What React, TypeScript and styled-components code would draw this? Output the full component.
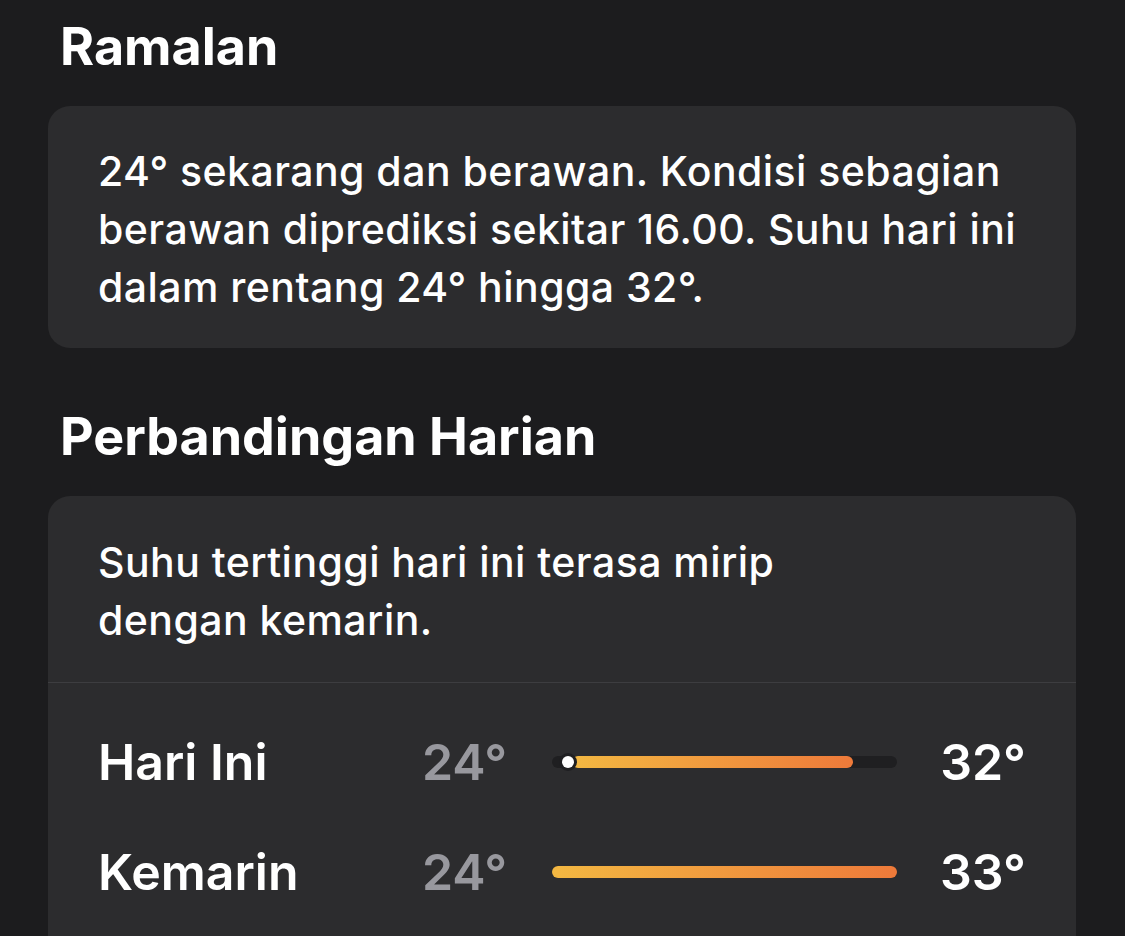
import React from 'react';
import styled, { createGlobalStyle } from 'styled-components';

const GlobalStyle = createGlobalStyle`
  html, body {
    margin: 0;
    padding: 0;
    background: #1c1c1e;
  }
  body {
    font-family: Inter, "Noto Sans", "Liberation Sans", sans-serif;
    color: #ffffff;
  }
`;

const Page = styled.main`
  width: 1125px;
  height: 936px;
  overflow: hidden;
  box-sizing: border-box;
  padding: 15px 49px 0 48px;
`;

const Heading = styled.h2`
  margin: 0 0 27px 12px;
  font-size: 52px;
  line-height: 64px;
  font-weight: 700;
`;

const Card = styled.section`
  background: #2c2c2e;
  border-radius: 22px;
  margin-bottom: 57px;
  overflow: hidden;
`;

const Summary = styled.p<{ $top?: number; $bottom?: number }>`
  margin: 0;
  padding: ${p => p.$top ?? 36}px 50px ${p => p.$bottom ?? 32}px 50px;
  font-size: 41px;
  line-height: 58px;
  font-weight: 500;
  letter-spacing: 0.45px;
`;

const Divider = styled.hr`
  margin: 0;
  border: none;
  height: 1px;
  background: #3d3d40;
`;

const Rows = styled.div`
  padding: 24px 50px 40px 50px;
`;

const Row = styled.div`
  display: grid;
  grid-template-columns: 324px 130px 345px 129px;
  align-items: center;
  height: 110px;
`;

const Label = styled.span`
  font-size: 50px;
  font-weight: 600;
`;

const Temp = styled.span<{ $muted?: boolean; $right?: boolean }>`
  font-size: 50px;
  font-weight: 600;
  color: ${p => (p.$muted ? '#98989e' : '#ffffff')};
  text-align: ${p => (p.$right ? 'right' : 'left')};
`;

const Track = styled.div`
  position: relative;
  height: 12px;
  border-radius: 6px;
  background: #1f1f21;
`;

const Fill = styled.div`
  position: absolute;
  top: 0;
  bottom: 0;
  border-radius: 6px;
  background: linear-gradient(to right, #f3b842, #ee7a3a);
`;

const Dot = styled.div`
  position: absolute;
  top: 50%;
  width: 12px;
  height: 12px;
  margin-left: -6px;
  margin-top: -6px;
  border-radius: 50%;
  background: #ffffff;
  box-shadow: 0 0 0 3px #1f1f21;
`;

type Day = { label: string; low: number; high: number; start: number; end: number; current?: number };

const days: Day[] = [
  { label: 'Hari Ini', low: 24, high: 32, start: 20, end: 301, current: 16 },
  { label: 'Kemarin', low: 24, high: 33, start: 0, end: 345 },
];

const App = () => (
  <Page>
    <GlobalStyle />
    <Heading>Ramalan</Heading>
    <Card>
      <Summary>
        24° sekarang dan berawan. Kondisi sebagian berawan diprediksi sekitar 16.00. Suhu hari ini dalam
        rentang 24° hingga 32°.
      </Summary>
    </Card>

    <Heading>Perbandingan Harian</Heading>
    <Card>
      <Summary $top={37} $bottom={33}>
        Suhu tertinggi hari ini terasa mirip
        <br />
        dengan kemarin.
      </Summary>
      <Divider />
      <Rows>
        {days.map(d => (
          <Row key={d.label}>
            <Label>{d.label}</Label>
            <Temp $muted>{d.low}°</Temp>
            <Track>
              <Fill style={{ left: d.start, width: d.end - d.start }} />
              {d.current !== undefined && <Dot style={{ left: d.current }} />}
            </Track>
            <Temp $right>{d.high}°</Temp>
          </Row>
        ))}
      </Rows>
    </Card>
  </Page>
);

export default App;
